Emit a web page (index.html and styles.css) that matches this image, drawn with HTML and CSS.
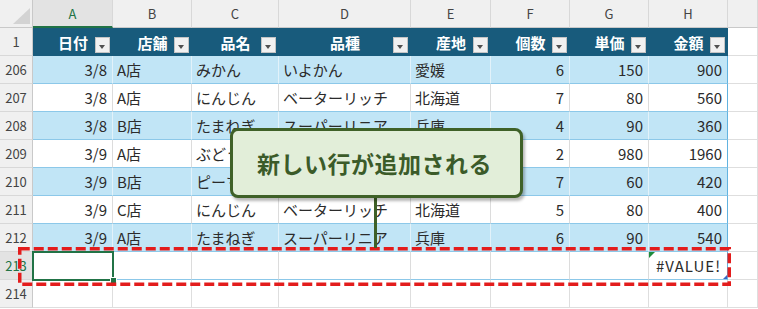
FILE: index.html
```html
<!DOCTYPE html>
<html lang="ja">
<head>
<meta charset="utf-8">
<title>テーブル</title>
<link rel="stylesheet" href="styles.css">
</head>
<body>
<div class="sheet">
  <div class="row">
    <div class="corner"></div>
    <div class="colhead active">A</div>
    <div class="colhead">B</div>
    <div class="colhead">C</div>
    <div class="colhead">D</div>
    <div class="colhead">E</div>
    <div class="colhead">F</div>
    <div class="colhead">G</div>
    <div class="colhead">H</div>
    <div class="colhead"></div>
  </div>
  <div class="row">
    <div class="rowhead">1</div>
    <div class="th">日付<span class="filter"></span></div>
    <div class="th">店舗<span class="filter"></span></div>
    <div class="th">品名<span class="filter"></span></div>
    <div class="th">品種<span class="filter"></span></div>
    <div class="th">産地<span class="filter"></span></div>
    <div class="th">個数<span class="filter"></span></div>
    <div class="th">単価<span class="filter"></span></div>
    <div class="th">金額<span class="filter"></span></div>
    <div class="c"></div>
  </div>
  <div class="row band">
    <div class="rowhead">206</div>
    <div class="td num">3/8</div><div class="td">A店</div><div class="td">みかん</div><div class="td">いよかん</div><div class="td">愛媛</div><div class="td num">6</div><div class="td num">150</div><div class="td num last">900</div>
    <div class="c"></div>
  </div>
  <div class="row">
    <div class="rowhead">207</div>
    <div class="td num">3/8</div><div class="td">A店</div><div class="td">にんじん</div><div class="td">ベーターリッチ</div><div class="td">北海道</div><div class="td num">7</div><div class="td num">80</div><div class="td num last">560</div>
    <div class="c"></div>
  </div>
  <div class="row band">
    <div class="rowhead">208</div>
    <div class="td num">3/8</div><div class="td">B店</div><div class="td">たまねぎ</div><div class="td">スーパーリニア</div><div class="td">兵庫</div><div class="td num">4</div><div class="td num">90</div><div class="td num last">360</div>
    <div class="c"></div>
  </div>
  <div class="row">
    <div class="rowhead">209</div>
    <div class="td num">3/9</div><div class="td">A店</div><div class="td">ぶどう</div><div class="td"></div><div class="td"></div><div class="td num">2</div><div class="td num">980</div><div class="td num last">1960</div>
    <div class="c"></div>
  </div>
  <div class="row band">
    <div class="rowhead">210</div>
    <div class="td num">3/9</div><div class="td">B店</div><div class="td">ピーマン</div><div class="td"></div><div class="td"></div><div class="td num">7</div><div class="td num">60</div><div class="td num last">420</div>
    <div class="c"></div>
  </div>
  <div class="row">
    <div class="rowhead">211</div>
    <div class="td num">3/9</div><div class="td">C店</div><div class="td">にんじん</div><div class="td">ベーターリッチ</div><div class="td">北海道</div><div class="td num">5</div><div class="td num">80</div><div class="td num last">400</div>
    <div class="c"></div>
  </div>
  <div class="row band">
    <div class="rowhead">212</div>
    <div class="td num">3/9</div><div class="td">A店</div><div class="td">たまねぎ</div><div class="td">スーパーリニア</div><div class="td">兵庫</div><div class="td num">6</div><div class="td num">90</div><div class="td num last">540</div>
    <div class="c"></div>
  </div>
  <div class="row">
    <div class="rowhead active">213</div>
    <div class="td sel"></div><div class="td"></div><div class="td"></div><div class="td"></div><div class="td"></div><div class="td"></div><div class="td"></div><div class="td num last err">#VALUE!</div>
    <div class="c"></div>
  </div>
  <div class="row">
    <div class="rowhead">214</div>
    <div class="c"></div><div class="c"></div><div class="c"></div><div class="c"></div><div class="c"></div><div class="c"></div><div class="c"></div><div class="c"></div><div class="c"></div>
  </div>

  <svg class="dashbox" width="713" height="39" viewBox="0 0 713 39">
    <rect x="1.75" y="1.75" width="709.5" height="35.5" fill="none" stroke="#e31c1c" stroke-width="3.5" stroke-dasharray="10 4"></rect>
  </svg>
  <div class="connector"></div>
  <div class="callout">新しい行が追加される</div>
</div>
</body>
</html>
```

FILE: styles.css
```css
html, body {
  margin: 0;
  padding: 0;
  background: #ffffff;
}

body {
  font-family: "Noto Sans CJK JP", "Noto Sans", sans-serif;
}

.sheet {
  position: relative;
  display: grid;
  grid-template-columns: 33px 80px 79px 87px 132px 80px 79px 79px 79px 30px;
  grid-auto-rows: 28px;
  width: 758px;
  height: 309px;
  overflow: hidden;
}

.row {
  display: contents;
}

.sheet > .row > div {
  box-sizing: border-box;
}

.corner {
  position: relative;
  background: #f0f0f0;
  border-right: 1px solid #c9c9c9;
  border-bottom: 1px solid #c9c9c9;
}

.corner::after {
  content: "";
  position: absolute;
  left: 13px;
  top: 8px;
  width: 17px;
  height: 16px;
  background: #d3d3d3;
  clip-path: polygon(100% 0, 100% 100%, 0 100%);
}

.colhead {
  display: flex;
  align-items: center;
  justify-content: center;
  background: #f0f0f0;
  color: #444444;
  font-size: 13px;
  border-right: 1px solid #d8d8d8;
  border-bottom: 1px solid #c9c9c9;
}

.colhead.active {
  background: #e3e3e3;
  color: #217346;
  border-bottom: 2px solid #217346;
}

.rowhead {
  display: flex;
  align-items: center;
  justify-content: center;
  background: #f0f0f0;
  color: #444444;
  font-size: 13px;
  border-right: 1px solid #c9c9c9;
  border-bottom: 1px solid #d8d8d8;
}

.rowhead.active {
  background: #e3e3e3;
  color: #217346;
}

.th {
  position: relative;
  display: flex;
  align-items: center;
  justify-content: center;
  background: #185b7c;
  color: #ffffff;
  font-size: 15px;
  font-weight: 700;
}

.filter {
  position: absolute;
  right: 3px;
  bottom: 3px;
  width: 15px;
  height: 16px;
  box-sizing: border-box;
  background: #f1f1f1;
  border: 1px solid #c4c4c4;
}

.filter::after {
  content: "";
  position: absolute;
  left: 3px;
  bottom: 3px;
  border-left: 3.5px solid transparent;
  border-right: 3.5px solid transparent;
  border-top: 4px solid #505050;
}

.td {
  display: flex;
  align-items: center;
  padding: 0 4px;
  font-size: 15px;
  color: #2b2b2b;
  white-space: nowrap;
  overflow: hidden;
  background: #ffffff;
  border-right: 1px solid #dcdcdc;
  border-bottom: 1px solid #8cc8e9;
}

.band .td {
  background: #c1e5f6;
  border-right-color: #e2f2fa;
}

.td.num {
  justify-content: flex-end;
  padding-right: 5px;
}

.td.last {
  border-right: 1px solid #62b3e0;
}

.c {
  border-right: 1px solid #dedede;
  border-bottom: 1px solid #dedede;
}

.td.sel {
  position: relative;
  overflow: visible;
}

.td.sel::before {
  content: "";
  position: absolute;
  left: -1px;
  top: -1px;
  width: 82px;
  height: 30px;
  box-sizing: border-box;
  border: 2px solid #217346;
}

.td.sel::after {
  content: "";
  position: absolute;
  left: 77px;
  top: 25px;
  width: 5px;
  height: 5px;
  background: #217346;
  border: 1px solid #ffffff;
  box-sizing: content-box;
}

.td.err {
  position: relative;
  padding-right: 6px;
  letter-spacing: 1px;
}

.td.err::before {
  content: "";
  position: absolute;
  left: 0;
  top: 0;
  border-top: 6px solid #1f8b3c;
  border-right: 6px solid transparent;
}

.td.err::after {
  content: "";
  position: absolute;
  right: 0;
  bottom: 0;
  border-bottom: 4px solid #3867c4;
  border-left: 4px solid transparent;
}

.dashbox {
  position: absolute;
  left: 18px;
  top: 247px;
}

.connector {
  position: absolute;
  left: 374px;
  top: 196px;
  width: 3px;
  height: 52px;
  background: #3f6128;
}

.callout {
  position: absolute;
  left: 230px;
  top: 128px;
  width: 293px;
  height: 70px;
  box-sizing: border-box;
  display: flex;
  align-items: center;
  justify-content: center;
  padding-right: 4px;
  background: #e2eed9;
  border: 3px solid #3f6128;
  border-radius: 8px;
  box-shadow: 2px 3px 3px rgba(0, 0, 0, 0.28);
  color: #3b5b29;
  font-size: 23px;
  font-weight: 700;
  letter-spacing: 0.5px;
}
```
